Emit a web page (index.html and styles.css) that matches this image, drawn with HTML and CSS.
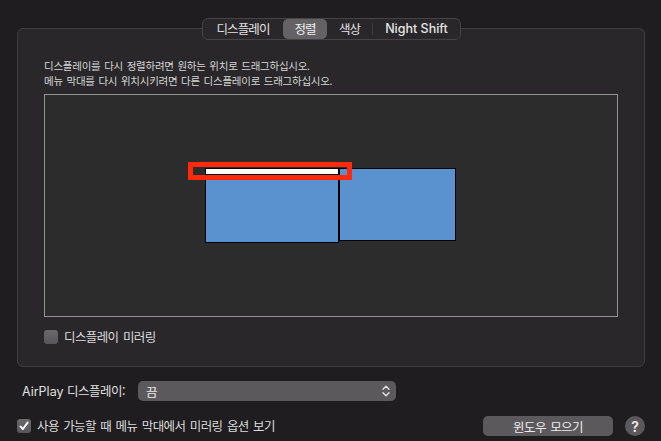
FILE: index.html
```html
<!DOCTYPE html>
<html lang="ko">
<head>
<meta charset="utf-8">
<link rel="stylesheet" href="styles.css">
</head>
<body>
<div class="window">
  <div class="panel">
    <div class="tabs">
      <div class="tab t1 ko">디스플레이</div>
      <div class="tab t2 sel ko">정렬</div>
      <div class="tab t3 ko">색상</div>
      <div class="sep"></div>
      <div class="tab t4 en">Night Shift</div>
    </div>
    <div class="hint ko">
      <div class="hint-line">디스플레이를 다시 정렬하려면 원하는 위치로 드래그하십시오.</div>
      <div class="hint-line">메뉴 막대를 다시 위치시키려면 다른 디스플레이로 드래그하십시오.</div>
    </div>
    <div class="canvas">
      <div class="disp d1"><div class="menubar"></div></div>
      <div class="disp d2"></div>
      <div class="highlight"></div>
    </div>
    <div class="check-row mirror">
      <span class="cb"></span>
      <span class="label ko">디스플레이 미러링</span>
    </div>
  </div>

  <div class="airplay-row">
    <span class="airplay-label"><span class="en">AirPlay</span> <span class="ko">디스플레이:</span></span>
    <div class="popup">
      <span class="ko">끔</span>
      <svg class="chev" width="8" height="12" viewBox="0 0 8 12">
        <path d="M1 4.2 L4 1.2 L7 4.2" fill="none" stroke="#e4e4e4" stroke-width="1.4" stroke-linecap="round" stroke-linejoin="round"/>
        <path d="M1 7.8 L4 10.8 L7 7.8" fill="none" stroke="#e4e4e4" stroke-width="1.4" stroke-linecap="round" stroke-linejoin="round"/>
      </svg>
    </div>
  </div>

  <div class="bottom-row">
    <div class="check-row">
      <span class="cb checked">
        <svg width="14" height="14" viewBox="0 0 14 14"><path d="M3.4 7.4 L5.9 10 L10.6 3.6" fill="none" stroke="#ffffff" stroke-width="1.9" stroke-linecap="round" stroke-linejoin="round"/></svg>
      </span>
      <span class="label ko">사용 가능할 때 메뉴 막대에서 미러링 옵션 보기</span>
    </div>
    <div class="spacer"></div>
    <div class="button ko">윈도우 모으기</div>
    <div class="help">?</div>
  </div>
</div>
</body>
</html>
```

FILE: styles.css
```css
* { box-sizing: border-box; }

html, body {
  margin: 0;
  padding: 0;
  background: #1f1d1f;
}

body {
  width: 661px;
  height: 441px;
  overflow: hidden;
  color: #dedede;
  font-family: "Inter", "Noto Sans CJK KR", sans-serif;
  font-size: 12px;
}

.ko {
  font-family: "Noto Sans CJK KR", sans-serif;
  letter-spacing: -0.6px;
  word-spacing: 1.5px;
}

.en {
  font-family: "Inter", "Noto Sans", sans-serif;
  letter-spacing: 0;
}

.window {
  padding-top: 28px;
}

/* group box */
.panel {
  margin-left: 17px;
  width: 628px;
  height: 339px;
  border: 1px solid #3f3d40;
  border-radius: 6px;
  background: #29272a;
  padding: 0 25px 0 26px;
}

/* segmented control */
.tabs {
  display: flex;
  align-items: stretch;
  width: 259px;
  height: 22px;
  margin: -11px auto 0;
  border: 1px solid #454346;
  border-radius: 6px;
  background: #29272a;
  padding: 0;
}

.tab {
  display: flex;
  align-items: center;
  justify-content: center;
  font-size: 12.5px;
  line-height: 20px;
  color: #e2e2e2;
  border-radius: 5px;
}

.tab.ko { letter-spacing: -0.9px; }

.t1 { width: 80px; }
.t2 { width: 44px; }
.t3 { width: 45px; }
.t4 { width: 87px; font-size: 12.5px; font-weight: 500; color: #e4e4e4; }

.tab.sel {
  background: #646265;
  color: #f0f0f0;
}

.sep {
  width: 1px;
  background: #3f3d40;
  margin: 4px 0;
}

/* hint text */
.hint {
  margin: 18px 0 6px;
  font-size: 10.5px;
  color: #d6d6d6;
  letter-spacing: -0.25px;
  word-spacing: 1px;
}

.hint-line {
  height: 15px;
  line-height: 15px;
  white-space: nowrap;
}

/* arrangement canvas */
.canvas {
  position: relative;
  width: 574px;
  height: 223px;
  border: 1px solid #939393;
  background: #2c2c2c;
}

.disp {
  position: absolute;
  background: #5a92d0;
  border: 1px solid #000;
}

.d1 { left: 160px; top: 73px; width: 134px; height: 75px; }
.d2 { left: 294px; top: 73px; width: 117px; height: 73px; }

.menubar {
  height: 6px;
  background: #ffffff;
  border-bottom: 1px solid #000;
}

.highlight {
  position: absolute;
  left: 143px;
  top: 67px;
  width: 164px;
  height: 18px;
  border: 5px solid #ff2a0c;
}

/* checkbox rows */
.check-row {
  display: flex;
  align-items: center;
  height: 14px;
}

.mirror {
  margin-top: 13px;
}

.cb {
  width: 14px;
  height: 14px;
  border-radius: 3px;
  background: linear-gradient(#6a686b, #58565a);
  display: flex;
  align-items: center;
  justify-content: center;
  flex: none;
}

.cb svg { display: block; }

.check-row .label {
  margin-left: 6px;
  font-size: 12.5px;
  line-height: 14px;
  color: #dcdcdc;
  letter-spacing: -0.6px;
  word-spacing: 1.5px;
}

/* airplay */
.airplay-row {
  display: flex;
  align-items: center;
  margin-top: 14px;
  padding-left: 22px;
  height: 20px;
}

.airplay-label {
  width: 116px;
  font-size: 12.5px;
  line-height: 20px;
  color: #e0e0e0;
}

.airplay-label .ko { letter-spacing: -0.5px; }

.popup {
  width: 258px;
  height: 20px;
  border-radius: 5px;
  background: #5c595d;
  display: flex;
  align-items: center;
  padding: 0 6px 0 8px;
  font-size: 12.5px;
  color: #eaeaea;
}

.popup .ko { flex: 1; }

.chev { display: block; }

/* bottom row */
.bottom-row {
  display: flex;
  align-items: center;
  margin-top: 15px;
  padding-left: 17px;
  padding-right: 16px;
  height: 20px;
}

.spacer { flex: 1; }

.button {
  width: 130px;
  height: 20px;
  border-radius: 5px;
  background: #5c595d;
  display: flex;
  align-items: center;
  justify-content: center;
  font-size: 12.5px;
  color: #ececec;
  letter-spacing: -0.6px;
}

.help {
  margin-left: 12px;
  width: 20px;
  height: 20px;
  border-radius: 50%;
  background: #5c595d;
  color: #ececec;
  font-family: "Inter", sans-serif;
  font-weight: 600;
  font-size: 14px;
  display: flex;
  align-items: center;
  justify-content: center;
}
```
